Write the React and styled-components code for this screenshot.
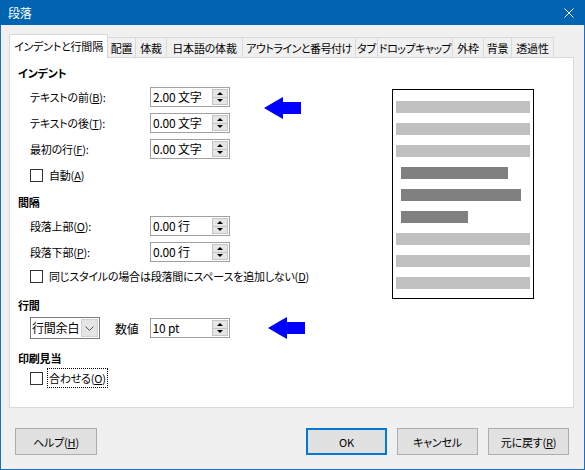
import styled, { createGlobalStyle } from "styled-components";

const GlobalStyle = createGlobalStyle`
  html, body { margin: 0; padding: 0; }
  body {
    font-family: "Noto Sans CJK JP", "Noto Sans", sans-serif;
    font-size: 11px;
    letter-spacing: -0.2px;
    font-feature-settings: "palt";
    color: #000;
    background: #f0f0f0;
  }
`;

const Window = styled.div`
  width: 585px;
  height: 470px;
  box-sizing: border-box;
  border: 1px solid #1a6fc0;
  border-top: none;
  background: #f0f0f0;
  display: flex;
  flex-direction: column;
`;

const TitleBar = styled.div`
  height: 25px;
  margin: 0 -1px;
  padding: 0 11px 0 8px;
  background: #0063b1;
  color: #fff;
  font-size: 12px;
  display: flex;
  align-items: center;
  justify-content: space-between;
`;

const Body = styled.div`
  flex: 1;
  padding: 9px 10px 0 8px;
  display: flex;
  flex-direction: column;
`;

const TabStrip = styled.div`
  display: flex;
  align-items: flex-end;
  height: 23px;
  position: relative;
  z-index: 1;
`;

const Tab = styled.div`
  box-sizing: border-box;
  width: ${(p) => p.$w}px;
  height: ${(p) => (p.$active ? 24 : 20)}px;
  margin-left: ${(p) => (p.$first ? 0 : -1)}px;
  margin-bottom: ${(p) => (p.$active ? -1 : 0)}px;
  padding-bottom: ${(p) => (p.$active ? 2 : 0)}px;
  border: 1px solid #d9d9d9;
  border-bottom: none;
  background: ${(p) => (p.$active ? "#fff" : "#f0f0f0")};
  display: flex;
  align-items: center;
  justify-content: center;
  white-space: nowrap;
  overflow: hidden;
  letter-spacing: ${(p) => (p.$tight ? "-0.5px" : "-0.2px")};
`;

const Panel = styled.div`
  box-sizing: border-box;
  height: 351px;
  background: #fff;
  border: 1px solid #d9d9d9;
  padding: 7px 8px 0 8px;
  display: flex;
`;

const FormCol = styled.div`
  flex: 1;
  display: flex;
  flex-direction: column;
`;

const SectionHead = styled.div`
  height: 16px;
  line-height: 16px;
  font-weight: 700;
  margin-top: ${(p) => p.$mt || 0}px;
`;

const Items = styled.div`
  margin-left: 12px;
  margin-top: ${(p) => p.$mt || 0}px;
  display: flex;
  flex-direction: column;
`;

const FieldRow = styled.div`
  height: ${(p) => p.$h || 26}px;
  display: flex;
  align-items: center;
  white-space: nowrap;
`;

const Label = styled.span`
  width: 120px;
`;

const SpinBox = styled.div`
  box-sizing: border-box;
  width: 80px;
  height: 20px;
  border: 1px solid #a0a0a0;
  background: #fff;
  display: flex;
  align-items: stretch;
`;

const SpinValue = styled.span`
  flex: 1;
  padding-left: 2px;
  line-height: 18px;
  font-size: 12px;
`;

const SpinButtons = styled.div`
  width: 16px;
  margin: 1px 1px 1px 0;
  display: flex;
  flex-direction: column;
`;

const SpinBtn = styled.div`
  flex: 1;
  box-sizing: border-box;
  background: #e6e6e6;
  border: 1px solid #c4c4c4;
  border-top: ${(p) => (p.$down ? "none" : "1px solid #c4c4c4")};
  display: flex;
  align-items: center;
  justify-content: center;
`;

const Tri = styled.span`
  width: 0;
  height: 0;
  border-left: 3px solid transparent;
  border-right: 3px solid transparent;
  border-bottom: ${(p) => (p.$down ? "none" : "3px solid #000")};
  border-top: ${(p) => (p.$down ? "3px solid #000" : "none")};
`;

const Dropdown = styled.div`
  box-sizing: border-box;
  width: 70px;
  height: 22px;
  border: 1px solid #7a7a7a;
  background: #fff;
  display: flex;
`;

const DropValue = styled.span`
  flex: 1;
  padding-left: 1px;
  line-height: 20px;
  font-size: 12px;
`;

const DropButton = styled.div`
  width: 17px;
  margin: 1px;
  background: #e5e5e5;
  border: 1px solid #cfcfcf;
  box-sizing: border-box;
  display: flex;
  align-items: center;
  justify-content: center;
`;

const ValueLabel = styled.span`
  margin: 0 11px 0 15px;
  font-size: 12px;
`;

const CheckBox = styled.span`
  box-sizing: border-box;
  width: 13px;
  height: 13px;
  border: 1px solid #333;
  background: #fff;
  margin-right: 5px;
`;

const CheckText = styled.span`
  padding: 0 1px;
  line-height: 18px;
  outline: ${(p) => (p.$focus ? "1px dotted #000" : "none")};
`;

const ArrowSlot = styled.div`
  margin-left: ${(p) => p.$ml}px;
  align-self: ${(p) => (p.$top ? "flex-start" : "center")};
  margin-top: ${(p) => p.$top || 0}px;
  display: flex;
`;

const Preview = styled.div`
  box-sizing: border-box;
  width: 142px;
  height: 210px;
  margin: 24px 31px 0 0;
  border: 1px solid #000;
  padding: 11px 3px 0 3px;
  display: flex;
  flex-direction: column;
  gap: 10px;
`;

const Bar = styled.div`
  height: 12px;
  width: ${(p) => (p.$w ? `${p.$w}px` : "100%")};
  margin-left: ${(p) => (p.$w ? 5 : 0)}px;
  background: ${(p) => (p.$dark ? "#808080" : "#c0c0c0")};
`;

const Footer = styled.div`
  display: flex;
  align-items: center;
  padding: 20px 5px 0 6px;
`;

const Spacer = styled.div`
  flex: 1;
`;

const Button = styled.div`
  box-sizing: border-box;
  width: ${(p) => p.$w || 81}px;
  height: 27px;
  margin-left: ${(p) => p.$ml || 0}px;
  background: #e1e1e1;
  border: ${(p) => (p.$default ? "2px solid #0078d7" : "1px solid #adadad")};
  display: flex;
  align-items: center;
  justify-content: center;
`;

const Arrow = () => (
  <svg width="37" height="22" viewBox="0 0 37 22">
    <path d="M0 11 Q10 5 19 0 L19 5 L37 5 L37 17 L19 17 L19 22 Q10 17 0 11 Z" fill="#0000ff" />
  </svg>
);

const Spin = ({ value }) => (
  <SpinBox>
    <SpinValue>{value}</SpinValue>
    <SpinButtons>
      <SpinBtn><Tri /></SpinBtn>
      <SpinBtn $down><Tri $down /></SpinBtn>
    </SpinButtons>
  </SpinBox>
);

const tabs = [
  { label: "インデントと行間隔", w: 99, active: true },
  { label: "配置", w: 29 },
  { label: "体裁", w: 32 },
  { label: "日本語の体裁", w: 77 },
  { label: "アウトラインと番号付け", w: 114, tight: true },
  { label: "タブ", w: 23 },
  { label: "ドロップキャップ", w: 76, tight: true },
  { label: "外枠", w: 32 },
  { label: "背景", w: 29 },
  { label: "透過性", w: 43 },
];

const bars = [null, null, null, 107, 120, 67, null, null, null];

export default function App() {
  return (
    <>
      <GlobalStyle />
      <Window>
        <TitleBar>
          <span>段落</span>
          <svg width="10" height="10" viewBox="0 0 10 10">
            <path d="M0.5 0.5 L9.5 9.5 M9.5 0.5 L0.5 9.5" stroke="#fff" strokeWidth="1" />
          </svg>
        </TitleBar>
        <Body>
          <TabStrip>
            {tabs.map((t, i) => (
              <Tab key={t.label} $w={t.w} $active={t.active} $first={i === 0} $tight={t.tight}>
                {t.label}
              </Tab>
            ))}
          </TabStrip>
          <Panel>
            <FormCol>
              <SectionHead>インデント</SectionHead>
              <Items $mt={3}>
                <FieldRow>
                  <Label>テキストの前(<u>B</u>):</Label>
                  <Spin value="2.00 文字" />
                  <ArrowSlot $ml={34} $top={13}><Arrow /></ArrowSlot>
                </FieldRow>
                <FieldRow>
                  <Label>テキストの後(<u>T</u>):</Label>
                  <Spin value="0.00 文字" />
                </FieldRow>
                <FieldRow>
                  <Label>最初の行(<u>F</u>):</Label>
                  <Spin value="0.00 文字" />
                </FieldRow>
                <FieldRow>
                  <CheckBox />
                  <CheckText>自動(<u>A</u>)</CheckText>
                </FieldRow>
              </Items>

              <SectionHead $mt={6}>間隔</SectionHead>
              <Items $mt={3}>
                <FieldRow>
                  <Label>段落上部(<u>O</u>):</Label>
                  <Spin value="0.00 行" />
                </FieldRow>
                <FieldRow>
                  <Label>段落下部(<u>P</u>):</Label>
                  <Spin value="0.00 行" />
                </FieldRow>
                <FieldRow $h={22}>
                  <CheckBox />
                  <CheckText>同じスタイルの場合は段落間にスペースを追加しない(<u>D</u>)</CheckText>
                </FieldRow>
              </Items>

              <SectionHead $mt={10}>行間</SectionHead>
              <Items $mt={3}>
                <FieldRow $h={24}>
                  <Dropdown>
                    <DropValue>行間余白</DropValue>
                    <DropButton>
                      <svg width="9" height="5" viewBox="0 0 9 5">
                        <path d="M0.5 0.5 L4.5 4.5 L8.5 0.5" stroke="#555" fill="none" />
                      </svg>
                    </DropButton>
                  </Dropdown>
                  <ValueLabel>数値</ValueLabel>
                  <Spin value="10 pt" />
                  <ArrowSlot $ml={38}><Arrow /></ArrowSlot>
                </FieldRow>
              </Items>

              <SectionHead $mt={10}>印刷見当</SectionHead>
              <Items $mt={2}>
                <FieldRow $h={20}>
                  <CheckBox />
                  <CheckText $focus>合わせる(<u>O</u>)</CheckText>
                </FieldRow>
              </Items>
            </FormCol>
            <Preview>
              {bars.map((w, i) => (
                <Bar key={i} $w={w} $dark={!!w} />
              ))}
            </Preview>
          </Panel>
          <Footer>
            <Button $w={82}>ヘルプ(<u>H</u>)</Button>
            <Spacer />
            <Button $default>OK</Button>
            <Button $ml={10}>キャンセル</Button>
            <Button $ml={10}>元に戻す(<u>R</u>)</Button>
          </Footer>
        </Body>
      </Window>
    </>
  );
}
